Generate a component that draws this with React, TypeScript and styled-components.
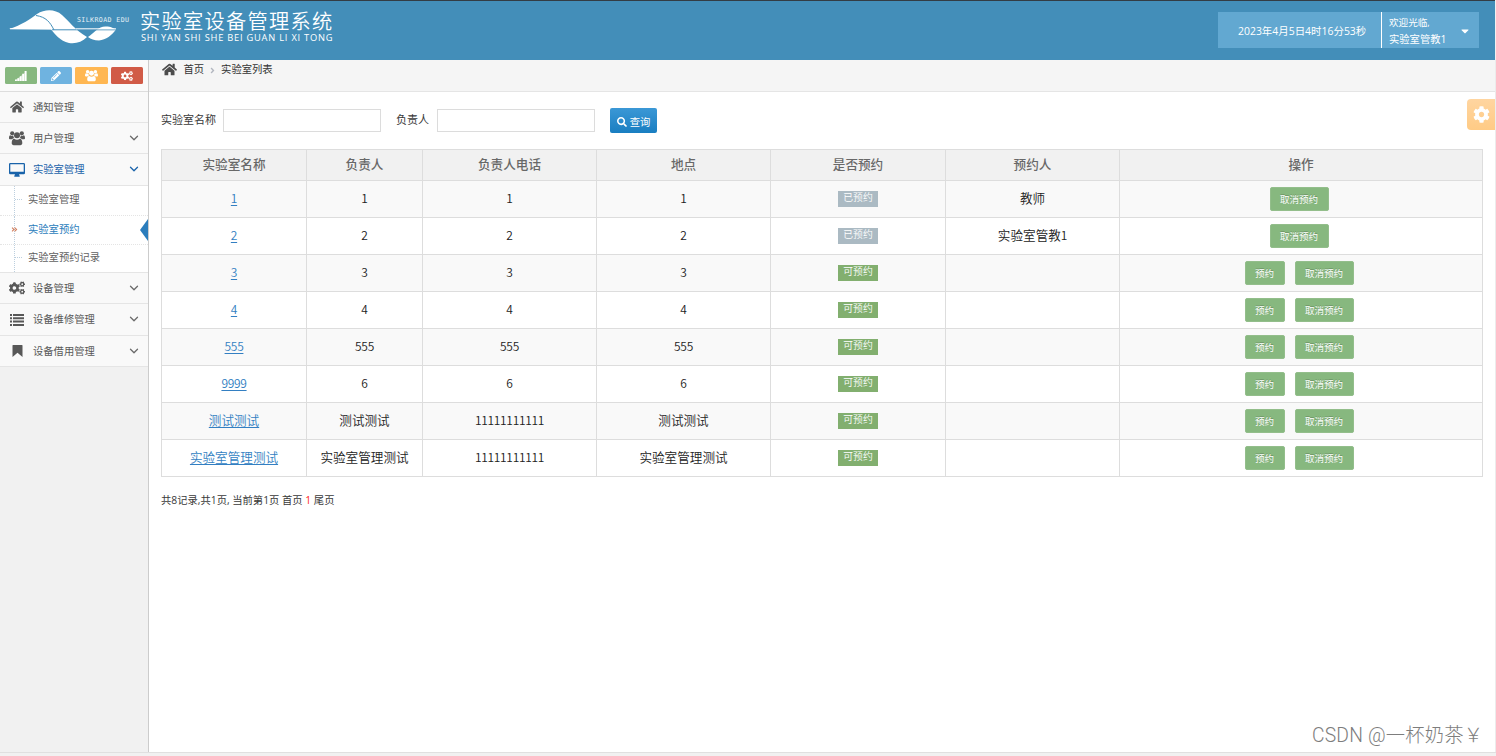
import React from 'react';
import styled, { createGlobalStyle } from 'styled-components';
import { ChevronDown } from 'lucide-react';
import {
  FaHome, FaCogs, FaSearch, FaPencilAlt,
  FaCog, FaAngleRight, FaAngleDoubleRight, FaCaretDown,
} from 'react-icons/fa';

const Global = createGlobalStyle`
  * { box-sizing: border-box; }
  body {
    margin: 0;
    background: #fff;
    color: #393939;
    font-family: "Open Sans", "Noto Sans CJK SC", sans-serif;
    font-size: 10.3px;
    line-height: 16px;
  }
`;

const Page = styled.div`
  height: 756px;
  display: flex;
  flex-direction: column;
  overflow: hidden;
  position: relative;
  background: #f1f1f1;
`;

const Header = styled.header`
  height: 60px;
  margin-right: 1px;
  flex: none;
  display: flex;
  justify-content: space-between;
  background: #438eb9;
  border-top: 1px solid #333c44;
  color: #fff;
`;

const Brand = styled.div`
  display: flex;
`;

const Wave = styled.svg`
  width: 140px;
  height: 50px;
  flex: none;
`;

const Titles = styled.div`
  display: flex;
  flex-direction: column;
  padding-top: 8px;
  white-space: nowrap;
`;

const Title = styled.h1`
  margin: 0;
  font-family: "Noto Sans CJK SC", sans-serif;
  font-size: 20.2px;
  line-height: 24px;
  font-weight: 350;
  letter-spacing: 1.3px;
`;

const Subtitle = styled.div`
  font-size: 9.3px;
  line-height: 10px;
  letter-spacing: 0.77px;
  padding-left: 1px;
`;

const UserBar = styled.div`
  display: flex;
  height: 36px;
  margin: 11px 16px 0 0;
  background: #62a8d1;
  white-space: nowrap;
`;

const Clock = styled.div`
  width: 164px;
  padding-left: 20px;
  font-size: 10.45px;
  line-height: 38px;
  border-right: 1px solid #fff;
`;

const Welcome = styled.div`
  width: 97px;
  padding: 1px 8px 0 7px;
  display: flex;
  align-items: center;
  justify-content: space-between;
  line-height: 17px;
  small { font-size: 9.6px; display: block; }
`;

const Body = styled.div`
  height: 693px;
  flex: none;
  display: flex;
  border-bottom: 1px solid #e0e0e0;
`;

const Sidebar = styled.aside`
  width: 149px;
  flex: none;
  border-right: 1px solid #ccc;
  background: #f1f1f1;
`;

const Shortcuts = styled.div`
  height: 32px;
  padding: 7px 5px 0;
  display: flex;
  gap: 3px;
  background: #fafafa;
  border-bottom: 1px solid #ddd;
`;

const Shortcut = styled.button<{ $bg: string }>`
  width: 32.2px;
  height: 17px;
  padding: 0;
  border: 0;
  border-radius: 1.5px;
  display: flex;
  align-items: center;
  justify-content: center;
  color: #fff;
  background: ${(p) => p.$bg};
`;

const MenuItem = styled.div<{ $h: number; $open?: boolean }>`
  height: ${(p) => p.$h}px;
  padding: 0 8px 0 9px;
  display: flex;
  align-items: center;
  background: #f9f9f9;
  border-bottom: 1px solid #e5e5e5;
  color: ${(p) => (p.$open ? '#1963aa' : '#585858')};
`;

const MenuIcon = styled.span`
  width: 16px;
  margin-right: 8px;
  display: flex;
  justify-content: center;
  font-size: 14px;
`;

const MenuText = styled.span`
  flex: 1;
  padding-bottom: 1px;
  white-space: nowrap;
`;

const Chevron = styled(ChevronDown)<{ $open?: boolean }>`
  margin: 0 -1px 1px 0;
  color: ${(p) => (p.$open ? '#1963aa' : '#6b6b6b')};
`;

const SubMenu = styled.div`
  background: #fff;
  border-bottom: 1px solid #e5e5e5;
`;

const SubItem = styled.div<{ $h: number; $active?: boolean }>`
  height: ${(p) => p.$h}px;
  display: flex;
  align-items: center;
  position: relative;
  color: ${(p) => (p.$active ? '#2b7dbc' : '#616161')};
  & + & { border-top: 1px dotted #e4e4e4; }
  &::after {
    content: "";
    display: ${(p) => (p.$active ? 'block' : 'none')};
    position: absolute;
    right: 0;
    top: 3px;
    border: solid transparent;
    border-width: 11px 8px 11px 0;
    border-right-color: #2b7dbc;
  }
`;

const SubText = styled.span`
  padding-bottom: 3px;
`;

const Branch = styled.span<{ $active?: boolean }>`
  width: 14px;
  margin-left: 14px;
  align-self: stretch;
  display: flex;
  align-items: center;
  border-left: 1px dotted #bccfde;
  color: #c86139;
  font-size: 7px;
  padding-bottom: 2px;
  &::before {
    content: "";
    display: ${(p) => (p.$active ? 'none' : 'block')};
    width: 7px;
    border-top: 1px dotted #bccfde;
  }
  svg { margin-left: -4px; opacity: 0.8; }
`;

const Main = styled.main`
  flex: 1;
  background: #fff;
  border-right: 1px solid #ececec;
`;

const Crumbs = styled.nav`
  height: 32px;
  padding: 1px 0 0 13px;
  display: flex;
  align-items: flex-start;
  background: #f5f5f5;
  border-bottom: 1px solid #e5e5e5;
  color: #333;
`;

const HomeIcon = styled(FaHome)`
  font-size: 15px;
  color: #4c4c4c;
  margin: 1px 6.5px 0 0;
`;

const CrumbArrow = styled(FaAngleRight)`
  font-size: 9px;
  color: #b2b6bf;
  margin: 5px 4px 0;
`;

const Content = styled.div`
  padding: 16px 12px 0;
`;

const SearchForm = styled.div`
  height: 26px;
  display: flex;
  align-items: flex-start;
  margin-bottom: 15px;
`;

const Label = styled.label<{ $w: number }>`
  width: ${(p) => p.$w}px;
  font-size: 11px;
  line-height: 24px;
  white-space: nowrap;
`;

const Field = styled.input`
  width: 158px;
  height: 23px;
  margin: 1px 15px 0 0;
  border: 1px solid #dcdcdc;
  background: #fff;
`;

const SearchButton = styled.button`
  width: 47px;
  height: 25px;
  padding: 2px 0 0;
  border: 0;
  border-radius: 2px;
  display: flex;
  align-items: center;
  justify-content: center;
  gap: 3px;
  color: #fff;
  font: inherit;
  background: linear-gradient(#3b98d6, #197ec1);
`;

const Table = styled.table`
  table-layout: fixed;
  width: 1322px;
  border-collapse: separate;
  border-spacing: 0;
  border-top: 1px solid #ddd;
  border-left: 1px solid #ddd;
  color: #222;
  font-size: 12.6px;
  font-weight: 350;
  text-align: center;
  th, td {
    padding: 0 0 1px;
    border-right: 1px solid #ddd;
    border-bottom: 1px solid #ddd;
  }
`;

const Th = styled.th`
  height: 31px;
  background: #f1f1f1;
  color: #686868;
  font-weight: 500;
`;

const Row = styled.tr`
  height: 37px;
  &:nth-child(odd) { background: #f9f9f9; }
`;

const Digits = styled.span`
  font-family: "Noto Sans CJK SC", sans-serif;
  font-size: 12px;
  letter-spacing: -0.3px;
`;

const Link = styled.a`
  color: #337fc2;
  text-decoration: underline;
  text-underline-offset: 1.5px;
`;

const Badge = styled.span<{ $free: boolean }>`
  display: block;
  width: 40px;
  height: 16px;
  margin: 1px auto 0;
  line-height: 14px;
  font-size: 9.8px;
  color: #fff;
  background: ${(p) => (p.$free ? '#82af6f' : '#abbac3')};
`;

const Actions = styled.div`
  display: flex;
  justify-content: center;
  gap: 10px;
  padding: 1px 4px 0 0;
`;

const ActionButton = styled.button<{ $w: number }>`
  width: ${(p) => p.$w}px;
  height: 24px;
  padding: 2px 0 0;
  border: 1px solid #93be8b;
  border-radius: 2px;
  background: #87b87f;
  color: #fff;
  font: inherit;
  font-weight: 400;
  font-size: 9.5px;
  line-height: 18px;
  text-shadow: 0 -1px 0 rgba(0, 0, 0, 0.2);
`;

const Pager = styled.div`
  margin-top: 15px;
  white-space: pre;
  b { color: #f22; font-weight: 400; }
`;

const Settings = styled.button`
  position: absolute;
  top: 99px;
  right: 1px;
  width: 28px;
  height: 31px;
  padding: 0;
  border: 0;
  border-radius: 4px 0 0 4px;
  display: flex;
  align-items: center;
  justify-content: center;
  background: linear-gradient(#ffd5a0, #ffcb85);
  color: #fff;
  font-size: 17px;
`;

const Watermark = styled.div`
  position: absolute;
  left: 1312px;
  top: 723px;
  font-family: Roboto, "Noto Sans CJK SC", sans-serif;
  font-size: 19.3px;
  line-height: 26px;
  font-weight: 300;
  letter-spacing: 0.2px;
  color: #7d7d7d;
  white-space: nowrap;
`;

const columns: [string, number][] = [
  ['实验室名称', 145], ['负责人', 116], ['负责人电话', 174], ['地点', 174],
  ['是否预约', 175], ['预约人', 174], ['操作', 363],
];

const labs = [
  { name: '1', owner: '1', phone: '1', place: '1', by: '教师' },
  { name: '2', owner: '2', phone: '2', place: '2', by: '实验室管教1' },
  { name: '3', owner: '3', phone: '3', place: '3', by: '' },
  { name: '4', owner: '4', phone: '4', place: '4', by: '' },
  { name: '555', owner: '555', phone: '555', place: '555', by: '' },
  { name: '9999', owner: '6', phone: '6', place: '6', by: '' },
  { name: '测试测试', owner: '测试测试', phone: '11111111111', place: '测试测试', by: '' },
  { name: '实验室管理测试', owner: '实验室管理测试', phone: '11111111111', place: '实验室管理测试', by: '' },
];

const Value = ({ text }: { text: string }) => (
  <>{text.split(/(\d+)/).map((part, i) => (/^\d+$/.test(part) ? <Digits key={i}>{part}</Digits> : part))}</>
);

const SignalIcon = () => (
  <svg width="12" height="10" viewBox="0 0 12 10" fill="currentColor">
    <path d="M0 8.500h1.800V10H0zM2.400 7.200h1.800V10H2.400zM4.800 5.200h1.800V10H4.800zM7.200 2.800H9V10H7.200zM9.600 0h2v10h-2z" />
    <path opacity="0.5" d="M0 9.500L11 1V10H0z" />
  </svg>
);

const UsersIcon = ({ size }: { size: number }) => (
  <svg width={size} height={size} viewBox="0 0 16 16" fill="currentColor">
    <circle cx="3.200" cy="3.300" r="2.100" />
    <circle cx="12.800" cy="3.300" r="2.100" />
    <circle cx="8" cy="5.200" r="3" />
    <path d="M0 8.300C0 6.500 .5 5.300 1.300 5.300C2.200 6 3.200 6.100 4.300 5.600C4.300 6.700 4.600 7.500 5.200 8.100C4.200 8.200 3.600 8.700 3 9.300H1.300C.5 9.300 0 9 0 8.300Z" />
    <path d="M16 8.300C16 6.500 15.500 5.300 14.700 5.300C13.800 6 12.800 6.100 11.700 5.600C11.700 6.700 11.400 7.500 10.800 8.100C11.800 8.200 12.400 8.700 13 9.300H14.700C15.500 9.300 16 9 16 8.300Z" />
    <path d="M2.700 13C2.700 10.400 3.500 8.700 5.200 8.700C6.900 10 9.100 10 10.800 8.700C12.500 8.700 13.300 10.400 13.300 13C13.300 14.400 12.500 15.200 11.300 15.200H4.700C3.500 15.200 2.700 14.400 2.700 13Z" />
  </svg>
);

const DesktopIcon = () => (
  <svg width="16" height="14" viewBox="0 0 16 14" fill="currentColor">
    <path fillRule="evenodd" d="M1.300 0H14.700Q16 0 16 1.300V10Q16 11.300 14.700 11.300H10L10.700 13V13.700H5.300V13L6 11.300H1.300Q0 11.300 0 10V1.300Q0 0 1.300 0ZM1.300 1.300V8.700H14.700V1.300Z" />
  </svg>
);

const ListIcon = () => (
  <svg width="14" height="12" viewBox="0 0 14 12" fill="currentColor">
    <path d="M0 0h2v2H0zM3 0h11v2H3zM0 3.300h2v2H0zM3 3.300h11v2H3zM0 6.600h2v2H0zM3 6.600h11v2H3zM0 9.900h2v2H0zM3 9.900h11v2H3z" />
  </svg>
);

const BookmarkIcon = () => (
  <svg width="11" height="12" viewBox="0 0 11 12" fill="currentColor">
    <path d="M1 0H10Q10.500 0 10.500 .6V12L5.500 7.800L.5 12V.6Q.5 0 1 0Z" />
  </svg>
);

const Menu = ({ icon, text, h, open, leaf }: {
  icon: React.ReactNode; text: string; h: number; open?: boolean; leaf?: boolean;
}) => (
  <MenuItem $h={h} $open={open}>
    <MenuIcon>{icon}</MenuIcon>
    <MenuText>{text}</MenuText>
    {!leaf && <Chevron size={14} strokeWidth={2.2} $open={open} />}
  </MenuItem>
);

export default function App() {
  return (
    <Page>
      <Global />
      <Header>
        <Brand>
          <Wave viewBox="0 1 140 50">
            <path fill="#fff" d="M9 29C22 25 30 19 37 14C45 9 55 9 62 15C69 21 75 30 87 37C82 42 76 44 69 43C60 41 55 34 51 29.500Z" />
            <path fill="#fff" d="M88 37C94 33 99 26 106 26.500C111 26.500 113 28 116 29.500C112 35 106 40 99 40.500C94 40.500 91 39 88 37Z" />
            <path fill="none" stroke="#438eb9" strokeWidth="1" d="M36 15.500C46 17 50 22 54 30M52 29.800H116" />
            <path fill="none" stroke="#fff" strokeWidth="1" d="M10 28.800H51M76 28.800H116" />
            <text x="77" y="22" fill="#e4f0f7" fontFamily="DejaVu Sans Mono" fontSize="6.600" textLength="52">SILKROAD EDU</text>
          </Wave>
          <Titles>
            <Title>实验室设备管理系统</Title>
            <Subtitle>SHI YAN SHI SHE BEI GUAN LI XI TONG</Subtitle>
          </Titles>
        </Brand>
        <UserBar>
          <Clock>2023年4月5日4时16分53秒</Clock>
          <Welcome>
            <span><small>欢迎光临,</small>实验室管教1</span>
            <FaCaretDown size={12} />
          </Welcome>
        </UserBar>
      </Header>
      <Body>
        <Sidebar>
          <Shortcuts>
            <Shortcut $bg="#87b87f"><SignalIcon /></Shortcut>
            <Shortcut $bg="#6fb3e0"><FaPencilAlt size={10} /></Shortcut>
            <Shortcut $bg="#ffb752"><UsersIcon size={13} /></Shortcut>
            <Shortcut $bg="#d15b47"><FaCogs size={12} /></Shortcut>
          </Shortcuts>
          <Menu icon={<FaHome />} text="通知管理" h={31} leaf />
          <Menu icon={<UsersIcon size={16} />} text="用户管理" h={31} />
          <Menu icon={<DesktopIcon />} text="实验室管理" h={32} open />
          <SubMenu>
            <SubItem $h={29}><Branch /><SubText>实验室管理</SubText></SubItem>
            <SubItem $h={29} $active><Branch $active><FaAngleDoubleRight /></Branch><SubText>实验室预约</SubText></SubItem>
            <SubItem $h={28}><Branch /><SubText>实验室预约记录</SubText></SubItem>
          </SubMenu>
          <Menu icon={<FaCogs size={16} />} text="设备管理" h={31} />
          <Menu icon={<ListIcon />} text="设备维修管理" h={32} />
          <Menu icon={<BookmarkIcon />} text="设备借用管理" h={31} />
        </Sidebar>
        <Main>
          <Crumbs><HomeIcon />首页<CrumbArrow />实验室列表</Crumbs>
          <Content>
            <SearchForm>
              <Label $w={62}>实验室名称</Label>
              <Field />
              <Label $w={41}>负责人</Label>
              <Field />
              <SearchButton><FaSearch size={10} />查询</SearchButton>
            </SearchForm>
            <Table>
              <colgroup>{columns.map(([name, w]) => <col key={name} width={w} />)}</colgroup>
              <thead><tr>{columns.map(([name]) => <Th key={name}>{name}</Th>)}</tr></thead>
              <tbody>
                {labs.map((lab) => (
                  <Row key={lab.name}>
                    <td><Link><Value text={lab.name} /></Link></td>
                    <td><Value text={lab.owner} /></td>
                    <td><Value text={lab.phone} /></td>
                    <td><Value text={lab.place} /></td>
                    <td><Badge $free={!lab.by}>{lab.by ? '已预约' : '可预约'}</Badge></td>
                    <td><Value text={lab.by} /></td>
                    <td>
                      <Actions>
                        {!lab.by && <ActionButton $w={40}>预约</ActionButton>}
                        <ActionButton $w={59}>取消预约</ActionButton>
                      </Actions>
                    </td>
                  </Row>
                ))}
              </tbody>
            </Table>
            <Pager>共8记录,共1页, 当前第1页 首页 <b>1</b> 尾页</Pager>
          </Content>
        </Main>
      </Body>
      <Settings><FaCog /></Settings>
      <Watermark>CSDN @一杯奶茶￥</Watermark>
    </Page>
  );
}
